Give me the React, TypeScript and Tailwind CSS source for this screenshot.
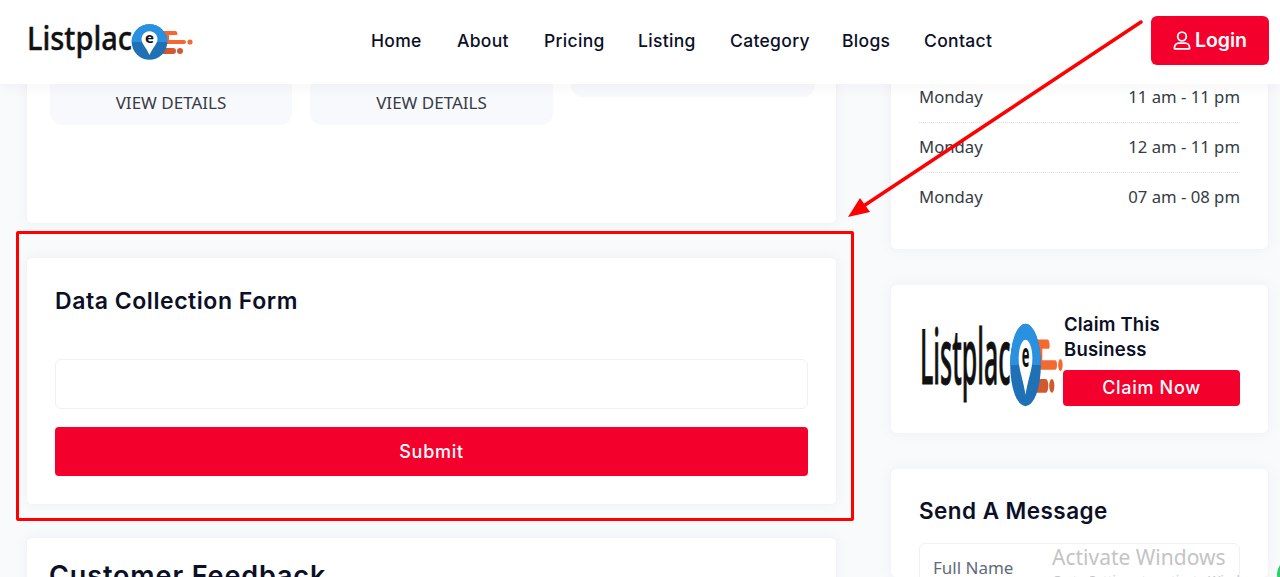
import React from "react";

const heading = { fontFamily: "Inter, 'Liberation Sans', sans-serif" };

function Logo({ className }: { className: string }) {
  return (
    <svg viewBox="27 24 166 38" preserveAspectRatio="none" className={className}>
      <defs>
        <clipPath id="pinTop"><rect x="125" y="20" width="50" height="23" /></clipPath>
      </defs>
      <text x="27" y="51" fontFamily="'Noto Sans', sans-serif" fontWeight="500" fontSize="33" fill="#111" stroke="#111" strokeWidth="0.4" textLength="105" lengthAdjust="spacingAndGlyphs">Listplac</text>
      <path d="M160 32h15a2.5 2.5 0 0 1 2 4h-8v5h15a2 2 0 0 1 0 4h-24z" fill="#f26a32" />
      <path d="M160 49h13a2.8 2.8 0 0 1 0 6h-13z" fill="#cf5a30" />
      <circle cx="180" cy="52" r="3" fill="#cf5a30" />
      <circle cx="190" cy="43" r="2.6" fill="#f26a32" />
      <circle cx="149.500" cy="43" r="17.800" fill="#1f70b5" />
      <circle cx="149.500" cy="43" r="17.800" fill="#2a90e0" clipPath="url(#pinTop)" />
      <path d="M142.500 44a8 8 0 1 1 14 0c-1.500 3-5 7-7 12c-2-5-5.500-9-7-12z" fill="#fff" />
      <text x="149.500" y="44" textAnchor="middle" fontFamily="'Noto Sans', sans-serif" fontWeight="700" fontSize="15" fill="#111">e</text>
    </svg>
  );
}

function Card({ className, children }: { className: string; children?: React.ReactNode }) {
  return (
    <div className={"bg-white rounded-[6px] border border-[#f3f4f8] shadow-[0_0_14px_rgba(30,40,80,0.045)] " + className}>
      {children}
    </div>
  );
}

function Chip({ w, h, text }: { w: string; h: string; text?: string }) {
  return (
    <div className={"bg-[#f8f9fc] rounded-b-[12px] flex items-end justify-center pb-[10px] text-[17px] leading-[24px] text-[#363b45] " + w + " " + h}>
      {text}
    </div>
  );
}

function Hours({ time, line }: { time: string; line?: boolean }) {
  return (
    <div className={"flex justify-between items-start h-[50px] pt-[12px] text-[16.700px] leading-[24px] text-[#363b45] border-b border-dotted " + (line ? "border-[#dfe2e8]" : "border-transparent")}>
      <span>Monday</span>
      <span>{time}</span>
    </div>
  );
}

export default function App() {
  return (
    <div className="relative w-[1280px] h-[577px] overflow-hidden bg-[#f9fafc]" style={{ fontFamily: "'Noto Sans', sans-serif" }}>
      <header className="relative z-10 h-[84px] bg-white flex items-center shadow-[0_2px_14px_rgba(30,40,80,0.05)]">
        <Logo className="ml-[27px] w-[166px] h-[38px] shrink-0" />
        <nav className="ml-[178px] -mt-[2px] flex text-[17.500px] font-medium tracking-[0.32px] text-[#0b1026]" style={heading}>
          <span className="w-[86px]">Home</span>
          <span className="w-[87px]">About</span>
          <span className="w-[94px]">Pricing</span>
          <span className="w-[92px]">Listing</span>
          <span className="w-[112px]">Category</span>
          <span className="w-[82px]">Blogs</span>
          <span>Contact</span>
        </nav>
        <button className="absolute left-[1151px] top-[16px] w-[118px] h-[49px] bg-[#f4002c] rounded-[6px] flex items-center justify-center gap-[4px] text-white text-[19.500px] font-semibold" style={heading}>
          <svg viewBox="0 0 18 19" className="w-[18px] h-[19px]" fill="none" stroke="currentColor" strokeWidth="1.8">
            <circle cx="9" cy="5.500" r="4.300" />
            <path d="M1.500 17.800v-1.300a4.300 4.300 0 0 1 4.300-4.300h6.400a4.300 4.300 0 0 1 4.300 4.300v1.300z" strokeLinejoin="round" />
          </svg>
          Login
        </button>
      </header>

      <main className="flex pl-[26px]">
        <div className="w-[811px] flex flex-col gap-[33px] shrink-0">
          <Card className="h-[140px] rounded-t-none border-t-0 flex gap-[18px] pl-[23px]">
            <Chip w="w-[242px]" h="h-[41px]" text="VIEW DETAILS" />
            <Chip w="w-[243px]" h="h-[41px]" text="VIEW DETAILS" />
            <Chip w="w-[244px]" h="h-[13px]" />
          </Card>
          <Card className="h-[248px] -mb-[1px] px-[28px] pt-[28px]">
            <h2 className="text-[23px] leading-[30px] font-semibold tracking-[0.55px] text-[#0b1026]" style={heading}>Data Collection Form</h2>
            <div className="mt-[43px] h-[50px] rounded-[6px] border border-[#eff1f5] bg-white" />
            <button className="mt-[18px] w-full h-[49px] rounded-[4px] bg-[#f4002c] text-white text-[18px] font-medium tracking-[0.7px]" style={heading}>Submit</button>
          </Card>
          <Card className="h-[60px] px-[22px] pt-[22px]">
            <h2 className="text-[27px] leading-[32px] font-semibold tracking-[0.88px] text-[#0b1026]" style={heading}>Customer Feedback</h2>
          </Card>
        </div>

        <div className="ml-[53px] w-[379px] flex flex-col gap-[34px] shrink-0">
          <Card className="h-[166px] rounded-t-none border-t-0 px-[28px]">
            <div className="-mt-[11px]" />
            <Hours time="11 am - 11 pm" line />
            <Hours time="12 am - 11 pm" line />
            <Hours time="07 am - 08 pm" />
          </Card>
          <Card className="h-[150px] pl-[29px] pr-[28px] flex items-center">
            <Logo className="w-[143px] h-[88px] mt-[11px] shrink-0" />
            <div className="w-[177px] -mt-[1px]">
              <div className="text-[18.500px] leading-[25px] font-semibold pl-[1px] tracking-[0.2px] text-[#0b1026]" style={heading}>Claim This<br />Business</div>
              <button className="w-full h-[36px] mt-[8px] rounded-[4px] bg-[#f4002c] text-white text-[18px] font-medium tracking-[0.7px]" style={heading}>Claim Now</button>
            </div>
          </Card>
          <Card className="h-[110px] px-[28px] pt-[27px]">
            <h2 className="text-[22.500px] leading-[30px] font-semibold tracking-[0.45px] text-[#0b1026]" style={heading}>Send A Message</h2>
            <div className="mt-[17px] h-[50px] rounded-t-[6px] border border-[#eff1f5] px-[13px] pt-[11px] text-[17px] text-[#5f6b7a]">Full Name</div>
          </Card>
        </div>
      </main>

      {/* annotation overlays */}
      <div className="absolute left-[16px] top-[231px] w-[838px] h-[290px] border-[3px] border-[#ff0000] rounded-[2px] z-20 pointer-events-none" />
      <svg viewBox="0 0 1280 577" className="absolute inset-0 w-[1280px] h-[577px] z-20 pointer-events-none">
        <line x1="1141" y1="22" x2="862" y2="207" stroke="#ff0000" strokeWidth="3.5" strokeLinecap="round" />
        <polygon points="848,217 860,198 870,212" fill="#ff0000" />
      </svg>
      <div className="absolute left-[1052px] top-[542px] z-20 text-[21px] leading-[30px] text-[#c4c4c4] whitespace-nowrap">Activate Windows</div>
      <div className="absolute left-[1052px] top-[571px] z-20 text-[13px] leading-[18px] text-[#c4c4c4] whitespace-nowrap">Go to Settings to activate Windows.</div>
      <div className="absolute left-[1277px] top-[559px] z-30 w-[30px] h-[30px] rounded-full bg-[#25d366]" />
    </div>
  );
}
